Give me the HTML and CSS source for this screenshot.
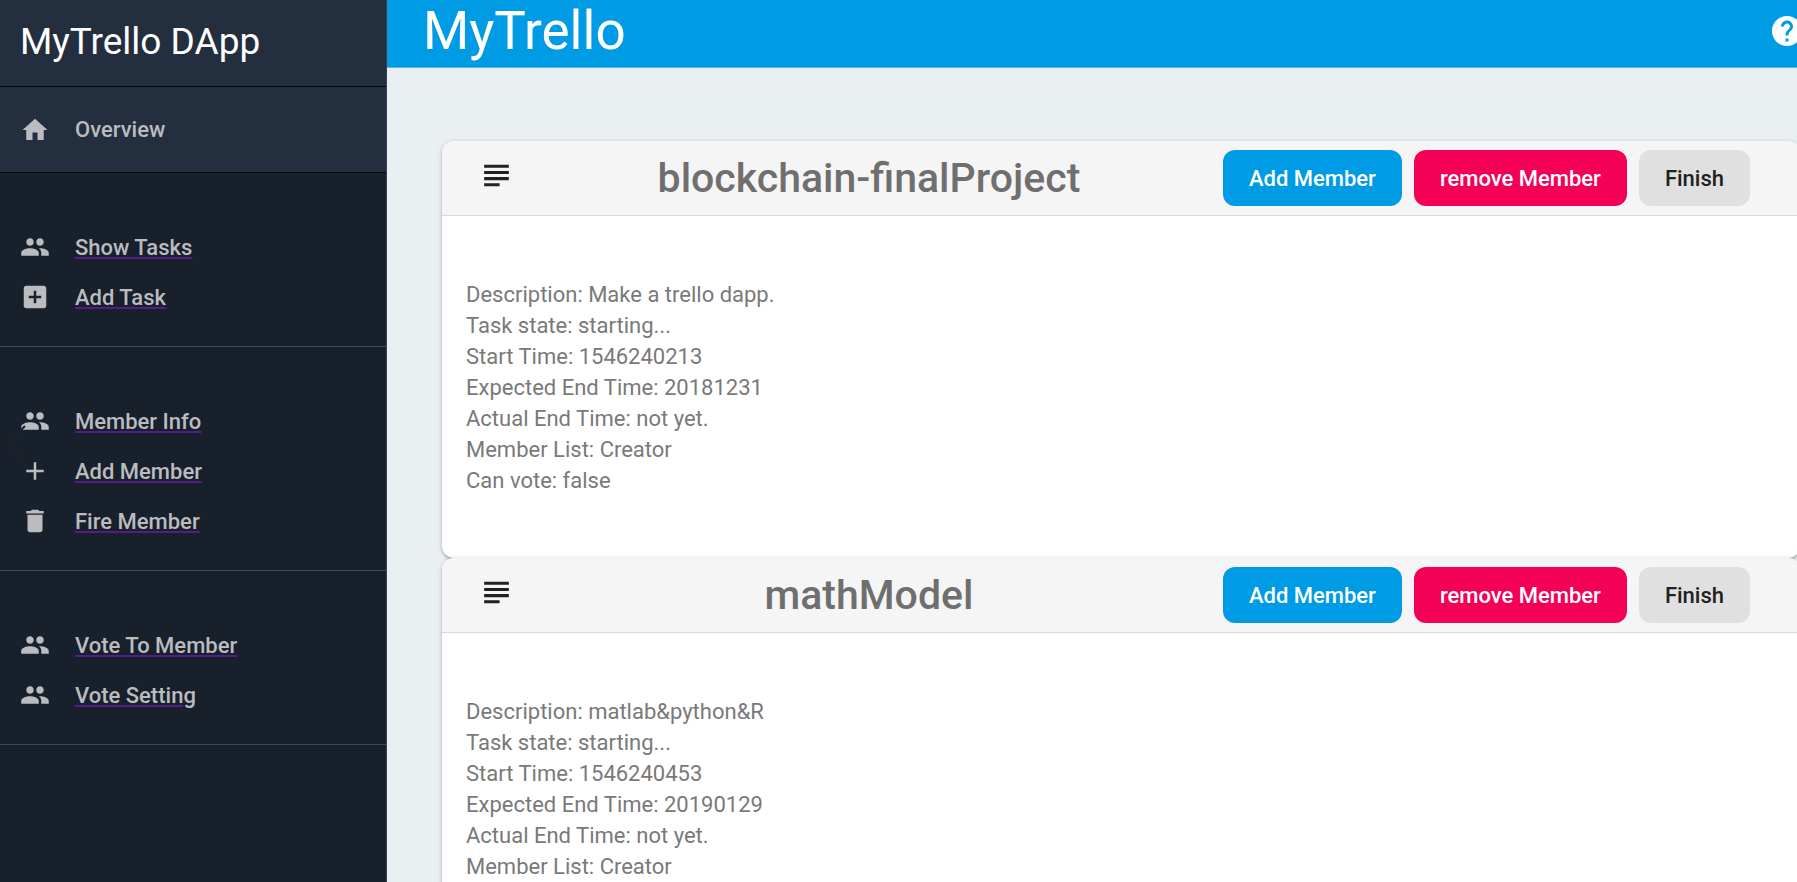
FILE: index.html
```html
<!DOCTYPE html>
<html lang="en">
<head>
<meta charset="utf-8">
<title>MyTrello DApp</title>
<link rel="stylesheet" href="styles.css">
</head>
<body>
<svg class="defs" aria-hidden="true">
  <symbol id="people" viewBox="0 0 24 24"><path d="M16 11c1.66 0 2.99-1.34 2.99-3S17.66 5 16 5c-1.66 0-3 1.34-3 3s1.34 3 3 3zm-8 0c1.66 0 2.99-1.34 2.99-3S9.66 5 8 5C6.34 5 5 6.34 5 8s1.34 3 3 3zm0 2c-2.33 0-7 1.17-7 3.5V19h14v-2.5c0-2.33-4.67-3.5-7-3.5zm8 0c-.29 0-.62.02-.97.05 1.16.84 1.97 1.97 1.97 3.45V19h6v-2.5c0-2.33-4.67-3.5-7-3.5z"/></symbol>
  <symbol id="home" viewBox="0 0 24 24"><path d="M10 20v-6h4v6h5v-8h3L12 3 2 12h3v8z"/></symbol>
  <symbol id="addbox" viewBox="0 0 24 24"><path d="M19 3H5c-1.11 0-2 .9-2 2v14c0 1.1.89 2 2 2h14c1.1 0 2-.9 2-2V5c0-1.1-.9-2-2-2zm-2 10h-4v4h-2v-4H7v-2h4V7h2v4h4v2z"/></symbol>
  <symbol id="add" viewBox="0 0 24 24"><path d="M19 13h-6v6h-2v-6H5v-2h6V5h2v6h6v2z"/></symbol>
  <symbol id="delete" viewBox="0 0 24 24"><path d="M6 19c0 1.1.9 2 2 2h8c1.1 0 2-.9 2-2V7H6v12zM19 4h-3.500l-1-1h-5l-1 1H5v2h14V4z"/></symbol>
  <symbol id="subject" viewBox="0 0 24 24"><path d="M14 17H4v2h10v-2zm6-8H4v2h16V9zM4 15h16v-2H4v2zM4 5v2h16V5H4z"/></symbol>
  <symbol id="help" viewBox="0 0 24 24"><path d="M12 2C6.48 2 2 6.480 2 12s4.480 10 10 10 10-4.480 10-10S17.520 2 12 2zm1 17h-2v-2h2v2zm2.070-7.750l-.9.920C13.450 12.900 13 13.500 13 15h-2v-.5c0-1.100.45-2.100 1.170-2.830l1.240-1.260c.37-.36.59-.86.59-1.410 0-1.100-.9-2-2-2s-2 .9-2 2H8c0-2.210 1.790-4 4-4s4 1.790 4 4c0 .88-.36 1.680-.93 2.250z"/></symbol>
</svg>
<div class="app">
  <nav class="sidebar">
    <div class="brand">MyTrello DApp</div>
    <div class="overview"><svg class="nav-icon"><use href="#home"/></svg><span>Overview</span></div>
    <div class="group">
      <div class="item"><svg class="nav-icon"><use href="#people"/></svg><a href="#tasks">Show Tasks</a></div>
      <div class="item"><svg class="nav-icon"><use href="#addbox"/></svg><a href="#add-task">Add Task</a></div>
    </div>
    <div class="group">
      <div class="item"><svg class="nav-icon"><use href="#people"/></svg><a href="#info">Member Info</a></div>
      <div class="item"><svg class="nav-icon"><use href="#add"/></svg><a href="#add-member">Add Member</a></div>
      <div class="item"><svg class="nav-icon"><use href="#delete"/></svg><a href="#fire">Fire Member</a></div>
    </div>
    <div class="group">
      <div class="item"><svg class="nav-icon"><use href="#people"/></svg><a href="#vote">Vote To Member</a></div>
      <div class="item"><svg class="nav-icon"><use href="#people"/></svg><a href="#setting">Vote Setting</a></div>
    </div>
    <svg class="prev" viewBox="0 0 20 38"><path d="M19 1L1 19l18 18"/></svg>
  </nav>
  <div class="page">
    <header class="topbar">
      <h1>MyTrello</h1>
      <button class="help" aria-label="Help"><svg><use href="#help"/></svg></button>
    </header>
    <main class="content">
      <section class="card">
        <div class="card-head">
          <svg class="subject"><use href="#subject"/></svg>
          <h2>blockchain-finalProject</h2>
          <div class="actions"><button class="btn primary">Add Member</button><button class="btn danger">remove Member</button><button class="btn">Finish</button></div>
        </div>
        <div class="card-body">
          <div>Description: Make a trello dapp.</div>
          <div>Task state: starting...</div>
          <div>Start Time: 1546240213</div>
          <div>Expected End Time: 20181231</div>
          <div>Actual End Time: not yet.</div>
          <div>Member List: Creator</div>
          <div>Can vote: false</div>
        </div>
      </section>
      <section class="card">
        <div class="card-head">
          <svg class="subject"><use href="#subject"/></svg>
          <h2>mathModel</h2>
          <div class="actions"><button class="btn primary">Add Member</button><button class="btn danger">remove Member</button><button class="btn">Finish</button></div>
        </div>
        <div class="card-body">
          <div>Description: matlab&amp;python&amp;R</div>
          <div>Task state: starting...</div>
          <div>Start Time: 1546240453</div>
          <div>Expected End Time: 20190129</div>
          <div>Actual End Time: not yet.</div>
          <div>Member List: Creator</div>
        </div>
      </section>
    </main>
  </div>
</div>
</body>
</html>
```
FILE: styles.css
```css
* { box-sizing: border-box; }
body {
  margin: 0;
  height: 100vh;
  overflow: hidden;
  font-family: Roboto, "Liberation Sans", sans-serif;
  font-size: 22px;
  background: #eaeff1;
}
.defs { display: none; }
svg { fill: currentColor; flex: none; }
.app { display: flex; height: 100%; }

.sidebar {
  position: relative;
  flex: none;
  width: 387px;
  background: #18202c;
  border-right: 1px solid #3a424d;
  color: #babcbf;
  font-weight: 500;
}
.brand, .overview {
  display: flex;
  align-items: center;
  padding: 0 20px;
  background: #232f3e;
  border-bottom: 1px solid #04070b;
}
.brand {
  height: 87px;
  padding-bottom: 3px;
  color: #fff;
  font-size: 37px;
  font-weight: 400;
}
.overview { height: 86px; gap: 25px; }
.group { padding: 49px 0 24px; border-bottom: 1px solid #404854; }
.item { display: flex; align-items: center; gap: 25px; height: 50px; padding: 0 20px; }
.item a { color: inherit; text-decoration-color: #551a8b; }
.nav-icon { width: 30px; height: 30px; }
.prev {
  position: absolute;
  left: 6px;
  top: 425px;
  width: 20px;
  height: 38px;
  fill: none;
  stroke: #231f1e;
  stroke-width: 2;
}

.page { flex: 1; min-width: 0; overflow: hidden; }
.topbar {
  display: flex;
  align-items: center;
  justify-content: space-between;
  height: 68px;
  padding-left: 36px;
  background: #009be5;
  border-bottom: 1px solid #4fbaed;
  color: #fff;
}
h1, h2 { margin: 0; }
h1 { padding-bottom: 5px; font-size: 53px; font-weight: 400; }
.help { margin: 0 -8px 6px 0; padding: 0; border: 0; background: none; color: #fff; }
.help svg { display: block; width: 36px; height: 36px; }

.content { padding: 73px 0 0 55px; margin-right: -3px; }
.card {
  border-radius: 12px;
  background: #fff;
  box-shadow: 0 1px 5px rgba(0,0,0,.2), 0 2px 2px rgba(0,0,0,.14), 0 3px 1px -2px rgba(0,0,0,.12);
}
.card-head {
  display: flex;
  align-items: center;
  height: 75px;
  padding: 0 50px 0 36px;
  border-bottom: 1px solid #dadada;
  border-radius: 12px 12px 0 0;
  background: #f5f5f5;
}
.subject { width: 37px; height: 37px; margin-bottom: 6px; color: #212121; }
h2 { flex: 1; text-align: center; font-size: 41px; font-weight: 500; color: #6f6f6f; }
.actions { display: flex; gap: 12px; }
.btn {
  height: 56px;
  padding: 0 26px;
  border: 0;
  border-radius: 12px;
  background: #e0e0e0;
  color: #212121;
  font: 500 22px Roboto, "Liberation Sans", sans-serif;
}
.primary { background: #009be5; color: #fff; }
.danger { background: #f50057; color: #fff; }
.card-body { padding: 63px 24px 62px; line-height: 31px; color: #797979; }
```
